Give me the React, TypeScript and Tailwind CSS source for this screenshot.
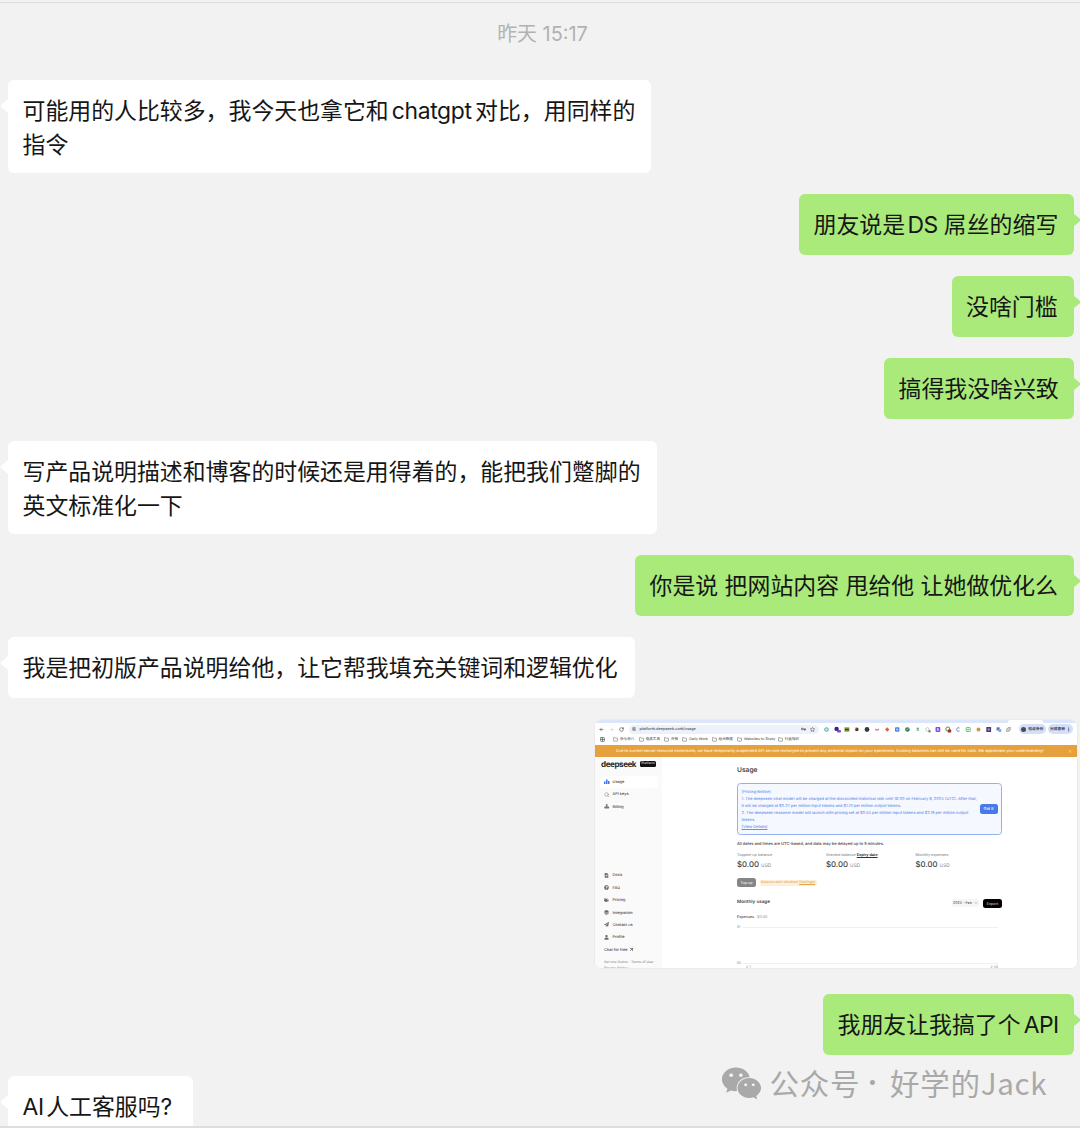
import React from 'react';
import { FaWeixin, FaFileAlt, FaQuestionCircle, FaTags, FaLayerGroup, FaPaperPlane, FaUser, FaStamp } from 'react-icons/fa';
import {
  ArrowLeft, ArrowRight, RotateCw, SlidersHorizontal, Star, Grid2X2, Folder, Search,
  ArrowUpRight, ChevronDown, X, MoreVertical, Puzzle,
} from 'lucide-react';

const CJK = "font-['Inter','Noto_Sans_CJK_SC',sans-serif]";

function Bubble({ me, className, children }: { me?: boolean; className: string; children: React.ReactNode }) {
  return (
    <div className={'flex ' + (me ? 'justify-end pr-[6.5px]' : 'pl-2')}>
      <div
        className={
          'relative shrink-0 rounded-[6px] pl-[14.5px] pt-[14px] text-[22.9px] leading-[34px] whitespace-nowrap text-[#161616] ' +
          (me ? 'bg-[#a9ea7a] ' : 'bg-white ') + className
        }
      >
        {children}
        <svg
          className={'absolute top-[19px] h-[14px] w-[8px] ' + (me ? '-right-[7.5px] text-[#a9ea7a]' : '-left-[8px] text-white')}
          viewBox="0 0 8 14"
          fill="currentColor"
        >
          {me ? <path d="M0 0L7 6Q8 7 7 8L0 14Z" /> : <path d="M8 0L1 6Q0 7 1 8L8 14Z" />}
        </svg>
      </div>
    </div>
  );
}

const bookmarks: [string, string][] = [
  ['杂七杂八', 'w-[25.7px]'], ['选品工具', 'w-[25.3px]'], ['外贸', 'w-[18.3px]'], ['Daily Work', 'w-[29.3px]'],
  ['后台数据', 'w-[25.5px]'], ['Websites to Study', 'w-[40.7px]'], ['行业知识', 'w-[26px]'],
];

function Extensions() {
  return (
    <svg className="ml-[4.5px] h-[7px] w-[180px] shrink-0" viewBox="0 0 180 7">
      <circle cx="2.5" cy="3.5" r="1.8" fill="#c9efe9" stroke="#35b3a4" strokeWidth="1" />
      <circle cx="12.6" cy="2.9" r="2.2" fill="#3b2293" /><rect x="13" y="4" width="4" height="2.6" rx="1" fill="#7c4bc4" />
      <rect x="20.4" y="1.2" width="5" height="4.6" rx=".6" fill="#88a63c" /><rect x="21" y="2.8" width="3.8" height="1.4" fill="#33441c" />
      <circle cx="32.8" cy="3.4" r="1.8" fill="#4c3b2c" /><path d="M30.5 1.3l2 1-1 1.4z" fill="#e6a33a" />
      <circle cx="43" cy="3.5" r="2.4" fill="#3b3940" />
      <path d="M51 2.4l2 1 2-1v1.6l-2 .8-2-.8z" fill="#d869a5" />
      <path d="M63.2 1.2l2.2 2.3-2.2 2.3L61 3.500z" fill="#e3603a" />
      <rect x="71" y="1.2" width="4.4" height="4.6" rx=".8" fill="#4a83e8" /><rect x="72.300" y="2.600" width="1.800" height="1.800" fill="#bcd2fa" />
      <circle cx="83.400" cy="3.500" r="2.300" fill="#367b60" /><path d="M82 4.300l2.500-2" stroke="#b9dccf" strokeWidth=".8" />
      <path d="M92.300 2.200h2.800M93 5l.7-3 .9 3" stroke="#55a670" strokeWidth=".8" fill="none" />
      <circle cx="103.400" cy="3.300" r="1.700" stroke="#b5b5b5" strokeWidth=".7" fill="none" /><rect x="104.500" y="4.300" width="2" height="2" fill="#666" />
      <rect x="111.500" y="1.100" width="4.800" height="4.800" rx=".8" fill="#8551d8" /><rect x="113" y="2.200" width="1.600" height="2.500" fill="#dacbf5" />
      <circle cx="123.800" cy="3" r="2" stroke="#448f4a" strokeWidth="1" fill="none" /><rect x="123.800" y="3.600" width="3.400" height="2.900" rx=".6" fill="#a33325" />
      <path d="M135.500 2.100a1.800 1.800 0 1 0 0 2.800" stroke="#7777e5" strokeWidth="1" fill="none" />
      <rect x="142.200" y="1.500" width="4" height="4" rx=".6" stroke="#62c066" strokeWidth=".9" fill="#dff4df" /><path d="M143.200 3.500h2" stroke="#62c066" strokeWidth=".8" />
      <circle cx="154.500" cy="3.500" r="2" fill="#d89245" />
      <rect x="162.300" y="1.100" width="4.800" height="4.800" rx=".5" fill="#4b3a70" /><rect x="163.700" y="2.500" width="2" height="2" fill="#a99cc6" />
      <rect x="172.500" y="1.200" width="3.200" height="3.400" rx=".5" fill="#4b82cf" /><rect x="174.500" y="3" width="2.800" height="3" rx=".5" fill="#8aabdd" />
    </svg>
  );
}

const nav = [
  { Icon: FaFileAlt, label: 'Docs' }, { Icon: FaQuestionCircle, label: 'FAQ' }, { Icon: FaTags, label: 'Pricing' },
  { Icon: FaLayerGroup, label: 'Integration' }, { Icon: FaPaperPlane, label: 'Contact us' }, { Icon: FaUser, label: 'Profile' },
];

function Browser() {
  return (
    <div className="h-[25px] bg-white">
      <div className="flex h-[2.5px] justify-end bg-[#dbe6fb] pr-[34px]">
        <div className="h-[2.5px] w-[35px] rounded-t-[2px] bg-white" />
      </div>
      <div className="flex h-[13px] items-center pl-[4px] text-[#555]">
        <ArrowLeft size={5} strokeWidth={3} /><ArrowRight size={5} className="ml-[5px] text-[#bbb]" /><RotateCw size={5} strokeWidth={3} className="ml-[5px]" />
        <div className="ml-[5px] flex h-[9px] w-[190px] shrink-0 items-center rounded-full bg-[#edf1fa] pr-[4px] pl-[3px]">
          <SlidersHorizontal size={4} strokeWidth={3} />
          <span className="ml-[3.5px] text-[3.85px] font-medium text-[#444]">platform.deepseek.com/usage</span>
          <svg className="ml-auto h-[4px] w-[5px]" viewBox="0 0 10 8" fill="none" stroke="currentColor" strokeWidth="1.6"><circle cx="2.500" cy="4" r="1.700" /><path d="M4 4h6M7 4v3M9.200 4v2.500" /></svg>
          <Star size={5} strokeWidth={3} className="ml-[4px]" />
        </div>
        <Extensions />
        <Puzzle size={5} strokeWidth={2.5} className="ml-[2.5px] shrink-0" />
        <div className="ml-[7.5px] flex h-[9.500px] w-[27.5px] shrink-0 items-center justify-center gap-[2px] rounded-full bg-[#d3e0f7] text-[3.8px] font-bold text-[#445]">
          <span className="size-[5px] rounded-full bg-[#454b5c]" />验证身份
        </div>
        <div className="ml-[2px] flex h-[9.500px] w-[25px] shrink-0 items-center justify-center gap-[1px] rounded-full bg-[#d3e0f7] text-[3.8px] font-bold text-[#445]">
          完成更新<MoreVertical size={5} />
        </div>
      </div>
      <div className="flex h-[8.500px] items-center pl-[5px] text-[3.6px] font-medium whitespace-nowrap text-[#555]">
        <Grid2X2 size={5} strokeWidth={3} className="mr-[8px]" />
        {bookmarks.map(([name, width]) => (
          <div key={name} className={'flex shrink-0 items-center gap-[2px] ' + width}><Folder size={5} strokeWidth={2.5} />{name}</div>
        ))}
      </div>
    </div>
  );
}

function Balance({ label, extra, className }: { label: string; extra?: string; className: string }) {
  return (
    <div className={className}>
      <div className="h-[6px] text-[3.8px] leading-[6px] text-[#777]">{label} {extra && <b className="text-[#333] underline">{extra}</b>}</div>
      <div className="mt-[0.7px] flex items-baseline gap-[2px] text-[7.8px] leading-[11px] font-medium text-[#444]">$0.00<span className="text-[4.8px] font-normal text-[#888]">USD</span></div>
    </div>
  );
}

function Sidebar() {
  return (
    <div className="flex h-full w-[67px] shrink-0 flex-col bg-[#fafafa] pl-[6px] text-[3.9px] font-medium text-[#444]">
      <div className="flex h-[14px] shrink-0 items-center gap-[3px]">
        <span className="w-[36px] text-[8.1px] leading-none font-bold tracking-[-0.45px] text-[#2b2b2b]">deepseek</span>
        <span className="flex h-[6px] w-[16px] items-center justify-center rounded-[1.5px] bg-[#111] text-[3.4px] text-[#ddd]">Platform</span>
      </div>
      <div className="mt-[4.8px] -ml-[1px] flex h-[12.3px] w-[58px] shrink-0 items-center gap-[3px] rounded-[4px] bg-white pl-[4px]">
        <svg className="size-[5.5px] text-[#3f70ed]" viewBox="0 0 11 11" fill="currentColor"><path d="M0 5h3v5H0zM4 1h3v9H4zM8 4h3v6H8z" /></svg>
        Usage
      </div>
      <div className="flex h-[12.4px] shrink-0 items-center gap-[3px] pl-[3px]"><Search size={5.5} className="text-[#777]" />API keys</div>
      <div className="flex h-[12.4px] shrink-0 items-center gap-[3px] pl-[3px]"><FaStamp className="h-[5px] w-[5.5px] text-[#778]" />Billing</div>
      <div className="mt-[56.2px]">
        {nav.map(({ Icon, label }) => (
          <div key={label} className="flex h-[12.4px] shrink-0 items-center gap-[3.5px] pl-[3px]"><Icon className="h-[4.800px] w-[5px] text-[#6b6b78]" />{label}</div>
        ))}
      </div>
      <div className="flex h-[12.4px] shrink-0 items-center gap-[1px] pl-[3px]">Chat for free<ArrowUpRight size={5} strokeWidth={3} /></div>
      <div className="mt-[3px] pl-[3px] text-[3.5px] leading-[6px] font-normal whitespace-nowrap text-[#888]">Service Status · Terms of Use ·<br />Privacy Policy ·</div>
    </div>
  );
}

function UsagePage() {
  return (
    <div className="w-[265px] text-[4px] whitespace-nowrap text-[#444]">
      <div className="mt-[8px] text-[6.7px] leading-[11px] font-semibold text-[#444]">Usage</div>
      <div className="mt-[7px] flex h-[51.5px] items-center justify-between rounded-[3.5px] border border-[#92b1f2] bg-[#f5f9ff] pr-[3.5px] pl-[3.5px] text-[3.93px] leading-[7px] font-medium text-[#6b8fea]">
        <div>
          [Pricing Notice]<br />
          1. The deepseek-chat model will be charged at the discounted historical rate until 16:00 on February 8, 2025 (UTC). After that,<br />
          it will be charged at $0.27 per million input tokens and $1.10 per million output tokens.<br />
          2. The deepseek-reasoner model will launch with pricing set at $0.55 per million input tokens and $2.19 per million output<br />
          tokens.<br />
          <u>[View Details]</u>
        </div>
        <div className="flex h-[9.5px] w-[18px] items-center justify-center rounded-[2.5px] bg-[#4679ea] text-white">Got it</div>
      </div>
      <div className="mt-[5.5px] h-[8px] text-[3.98px] leading-[8px] font-medium">All dates and times are UTC-based, and data may be delayed up to 5 minutes.</div>
      <div className="mt-[4.300px] flex">
        <Balance label="Topped-up balance" className="w-[89px]" />
        <Balance label="Granted balance" extra="Expiry date" className="w-[89.5px]" />
        <Balance label="Monthly expenses" className="w-[80px]" />
      </div>
      <div className="mt-[6.500px] flex items-center gap-[3.5px]">
        <div className="flex h-[9px] w-[19px] items-center justify-center rounded-[2.5px] bg-[#858585] text-[3.8px] text-white">Top up</div>
        <div className="flex h-[6.5px] w-[57px] items-center justify-center rounded-[2px] bg-[#fdefd9] text-[3.55px] text-[#e5a650]">Balance alert disabled&nbsp;<u>(Settings)</u></div>
      </div>
      <div className="mt-[11px] flex h-[10px] items-center">
        <div className="mr-auto text-[4.6px] font-semibold">Monthly usage</div>
        <div className="mr-[4px] flex h-[8px] w-[27px] items-center justify-center gap-[2px] rounded-[2.5px] bg-[#f6f6f6] text-[3.6px]">2025 - Feb<ChevronDown size={4} /></div>
        <div className="flex h-[9px] w-[19px] items-center justify-center rounded-[2.5px] bg-black text-[3.8px] text-[#ddd]">Export</div>
      </div>
      <div className="mt-[4.700px] flex h-[7px] items-center gap-[3px] text-[3.7px]"><span className="font-medium">Expenses</span><span className="text-[#888]">$0.00</span></div>
      <div className="mt-[5px] flex h-[5px] items-center gap-[2.5px] text-[3.3px] text-[#888]">$1<div className="mr-[4px] h-px grow bg-[#f0f0f0]" /></div>
      <div className="mt-[31px] flex h-[5px] items-center gap-[2px] text-[3.3px] text-[#888]">$0<div className="mr-[4px] h-px grow bg-[#f0f0f0]" /></div>
      <div className="-mt-[1.300px] flex h-[4px] items-center justify-between pr-[4px] pl-[9px] text-[3.3px] leading-[4px] text-[#888]"><span>2-1</span><span>2-28</span></div>
    </div>
  );
}

function SharedScreenshot() {
  return (
    <div className="mt-[21.5px] mr-[2px] ml-auto h-[250px] w-[484px] shrink-0 overflow-hidden rounded-[7px] border border-[#ebebeb] bg-white [text-rendering:geometricPrecision]">
      <Browser />
      <div className="flex h-[12px] items-center bg-[#e6a13f] pr-[5px] pl-[21px] text-[3.91px] font-medium whitespace-nowrap text-[#fff3df]">
        Due to current server resource constraints, we have temporarily suspended API service recharges to prevent any potential impact on your operations. Existing balances can still be used for calls. We appreciate your understanding!
        <X size={4.5} className="ml-auto shrink-0" />
      </div>
      <div className="flex h-[211px]">
        <Sidebar />
        <div className="pl-[75px]"><UsagePage /></div>
      </div>
    </div>
  );
}

export default function App() {
  return (
    <div className={'relative flex h-[1128px] w-[1080px] flex-col overflow-hidden bg-[#f2f2f2] ' + CJK}>
      <div className="mt-[2px] h-px shrink-0 bg-[#dcdcdc]" />
      <div className="mt-[16px] h-[30px] shrink-0 pl-[5px] text-center text-[19.9px] leading-[30px] text-[#b2b2b2]">昨天 15:17</div>
      <div className="mt-[31px] flex shrink-0 flex-col gap-[21.5px]">
        <Bubble className="h-[92.5px] w-[643px]">可能用的人比较多，我今天也拿它和<span className="mr-[3.500px] ml-[3px] tracking-[-0.35px]">chatgpt</span>对比，用同样的<br />指令</Bubble>
        <Bubble me className="h-[60.5px] w-[274.5px]">朋友说是<span className="ml-[2.5px] tracking-[-0.7px]">DS</span> 屌丝的缩写</Bubble>
        <Bubble me className="h-[60.5px] w-[122px]">没啥门槛</Bubble>
        <Bubble me className="h-[60.5px] w-[189.5px]">搞得我没啥兴致</Bubble>
        <Bubble className="mt-[1px] h-[92.5px] w-[649px]">写产品说明描述和博客的时候还是用得着的，能把我们蹩脚的<br />英文标准化一下</Bubble>
        <Bubble me className="h-[60.5px] w-[438.5px]">你是说 把网站内容 甩给他 让她做优化么</Bubble>
        <Bubble className="h-[60.5px] w-[626.5px]">我是把初版产品说明给他，让它帮我填充关键词和逻辑优化</Bubble>
      </div>
      <SharedScreenshot />
      <div className="mt-[25px] flex shrink-0 flex-col gap-[21.5px]">
        <Bubble me className="h-[60.5px] w-[250.5px]">我朋友让我搞了个<span className="ml-[3px] tracking-[-0.5px]">API</span></Bubble>
        <Bubble className="h-[60.5px] w-[185px]"><span className="mr-[2.5px] tracking-[-0.4px]">AI</span>人工客服吗?</Bubble>
      </div>
      <div className="absolute top-[1063.500px] left-[721px] flex h-[40px] items-center text-[#a9a9a9]">
        <FaWeixin className="h-[37px] w-[41px]" />
        <div className="-mt-[4px] ml-[7.5px] flex font-['Noto_Sans_CJK_SC',sans-serif] text-[29.5px] leading-[40px] tracking-[0.7px] whitespace-nowrap">
          <span>公众号</span><span className="ml-[7.500px] w-[22.500px] font-['Inter'] font-bold">·</span><span>好学的Jack</span>
        </div>
      </div>
      <div className="absolute bottom-0 left-0 h-[2px] w-full bg-[#dedede]" />
    </div>
  );
}
